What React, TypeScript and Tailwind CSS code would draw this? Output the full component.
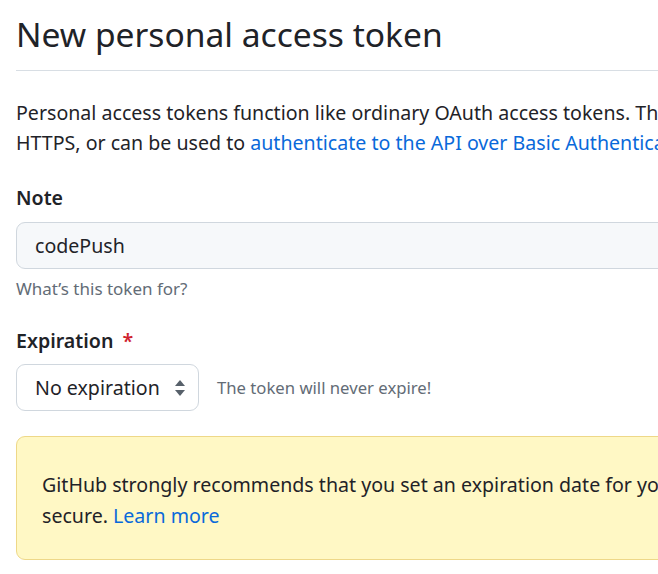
export default function App() {
  return (
    <div className="h-[574px] w-[658px] overflow-hidden bg-white text-[#1f2328]" style={{ fontFamily: '"Noto Sans", "Open Sans", sans-serif' }}>
      <div className="w-[1100px] pl-4">
        <div className="border-b border-[#d8dee4] pb-3 pt-[10px]">
          <h1 className="text-[33.6px] font-normal leading-[48px]">New personal access token</h1>
        </div>
        <p className="mt-[27px] whitespace-nowrap text-[19.6px] leading-[30px]">
          Personal access tokens function like ordinary OAuth access tokens. They can be used instead of a password for Git over
          <br />
          HTTPS, or can be used to{" "}
          <a className="text-[#0969da]" href="#">authenticate to the API over Basic Authentication</a>.
        </p>

        <div className="mt-[25px]">
          <label className="block text-[19.6px] font-semibold leading-[30px]">Note</label>
          <div className="mt-[9px] flex h-[47px] w-[900px] items-center rounded-[9px] border border-[#d0d7de] bg-[#f6f8fa] px-[18px] text-[19.6px]">
            codePush
          </div>
          <p className="mt-[8px] text-[17px] leading-[24px] text-[#636c76]">What’s this token for?</p>
        </div>

        <div className="mt-[25px]">
          <label className="block text-[19.6px] font-semibold leading-[30px]">
            Expiration <span className="ml-1 text-[#cf222e]">*</span>
          </label>
          <div className="mt-[8px] flex items-center gap-[18px]">
            <div className="flex h-[47px] w-[183px] items-center justify-between rounded-[9px] border border-[#d0d7de] bg-white pl-[18px] pr-[12px] text-[19.6px]">
              <span>No expiration</span>
              <svg width="12" height="18" viewBox="0 0 12 18" fill="#57606a">
                <path d="M6 1 L11 7 H1 Z" />
                <path d="M6 17 L11 11 H1 Z" />
              </svg>
            </div>
            <span className="text-[16.7px] text-[#636c76]">The token will never expire!</span>
          </div>
        </div>

        <div className="mt-[25px] h-[124px] w-[900px] whitespace-nowrap rounded-[9px] border border-[#eed888] bg-[#fff8c5] px-[25px] pt-[32px] text-[19.6px] leading-[31px]">
          GitHub strongly recommends that you set an expiration date for your token to help keep your information
          <br />
          secure. <a className="text-[#0969da]" href="#">Learn more</a>
        </div>
      </div>
    </div>
  );
}
